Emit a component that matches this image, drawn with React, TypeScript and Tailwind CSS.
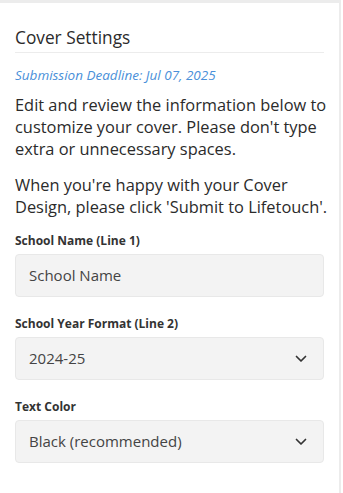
import React from "react";

function Chevron() {
  return (
    <svg width="12" height="8" viewBox="0 0 12 8" fill="none" className="shrink-0">
      <path d="M1.5 1.5L6 6L10.5 1.5" stroke="#333" strokeWidth="1.7" strokeLinecap="round" strokeLinejoin="round" />
    </svg>
  );
}

function Field({ label, value, select }: { label: string; value: string; select?: boolean }) {
  return (
    <div className="flex flex-col">
      <div className="text-[12px] leading-[17px] font-bold text-[#333]">{label}</div>
      <div className="mt-[5px] h-[43px] rounded-[4px] border border-[#e8e8e8] bg-[#f3f3f3] flex items-center justify-between pl-[13px] pr-[16px]">
        <span className="text-[15px] text-[#444]">{value}</span>
        {select && <Chevron />}
      </div>
    </div>
  );
}

export default function App() {
  return (
    <div className="w-[343px] h-[493px] bg-white" style={{ fontFamily: '"Open Sans", sans-serif' }}>
      <div className="w-[341px] h-full border-t-[3px] border-r-2 border-[#ececec] px-[15px] pt-[23px]">
        <div className="text-[17.3px] leading-[23px] text-[#2b2b2b] pb-[3px] border-b border-[#ececec]">Cover Settings</div>
        <div className="mt-[13px] text-[13.5px] leading-[18px] italic text-[#4a90d9]">Submission Deadline: Jul 07, 2025</div>
        <p className="mt-[10px] mr-[-12px] text-[16.4px] leading-[22px] text-[#2b2b2b] whitespace-nowrap">
          Edit and review the information below to
          <br />
          customize your cover. Please don't type
          <br />
          extra or unnecessary spaces.
        </p>
        <p className="mt-[14px] mr-[-12px] text-[16.4px] leading-[22px] text-[#2b2b2b] whitespace-nowrap">
          When you're happy with your Cover
          <br />
          Design, please click 'Submit to Lifetouch'.
        </p>
        <div className="mt-[14px] flex flex-col gap-[18px]">
          <Field label="School Name (Line 1)" value="School Name" />
          <Field label="School Year Format (Line 2)" value="2024-25" select />
          <Field label="Text Color" value="Black (recommended)" select />
        </div>
      </div>
    </div>
  );
}
